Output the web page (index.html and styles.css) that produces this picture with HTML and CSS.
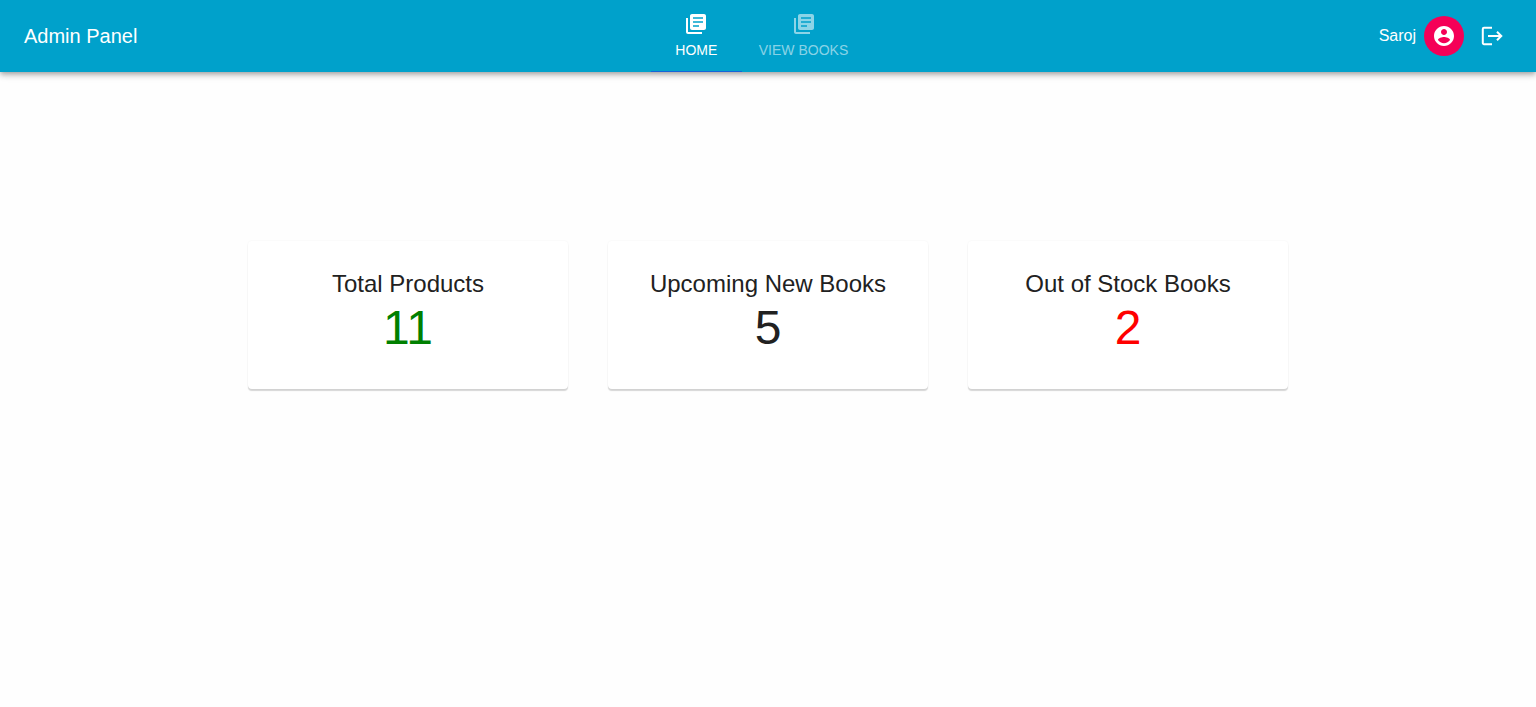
FILE: index.html
```html
<!DOCTYPE html>
<html lang="en">
<head>
<meta charset="utf-8">
<meta name="viewport" content="width=device-width, initial-scale=1">
<title>Admin Panel</title>
<link rel="stylesheet" href="styles.css">
</head>
<body>
<header class="app-bar">
  <h1 class="brand">Admin Panel</h1>
  <nav class="tabs" aria-label="Main">
    <a class="tab tab-active" href="#home" aria-current="page">
      <svg class="icon" viewBox="0 0 24 24" aria-hidden="true"><path d="M4 6H2v14c0 1.100.9 2 2 2h14v-2H4V6zm16-4H8c-1.100 0-2 .9-2 2v12c0 1.100.9 2 2 2h12c1.100 0 2-.9 2-2V4c0-1.100-.9-2-2-2zm-1 8.800H9V9.200h10v1.600zm-4 4H9v-1.600h6v1.600zm4-8H9V5.200h10v1.600z"/></svg>
      <span>HOME</span>
    </a>
    <a class="tab" href="#books">
      <svg class="icon" viewBox="0 0 24 24" aria-hidden="true"><path d="M4 6H2v14c0 1.100.9 2 2 2h14v-2H4V6zm16-4H8c-1.100 0-2 .9-2 2v12c0 1.100.9 2 2 2h12c1.100 0 2-.9 2-2V4c0-1.100-.9-2-2-2zm-1 8.800H9V9.200h10v1.600zm-4 4H9v-1.600h6v1.600zm4-8H9V5.200h10v1.600z"/></svg>
      <span>VIEW BOOKS</span>
    </a>
  </nav>
  <div class="account">
    <span>Saroj</span>
    <span class="avatar">
      <svg class="icon" viewBox="0 0 24 24" aria-hidden="true"><path d="M12 2C6.480 2 2 6.480 2 12s4.480 10 10 10 10-4.480 10-10S17.520 2 12 2zm0 3c1.660 0 3 1.340 3 3s-1.340 3-3 3-3-1.340-3-3 1.340-3 3-3zm0 14.200c-2.500 0-4.710-1.280-6-3.220.03-1.990 4-3.080 6-3.080 1.990 0 5.970 1.090 6 3.080-1.290 1.940-3.500 3.220-6 3.220z"/></svg>
    </span>
    <button class="logout" type="button" aria-label="Log out">
      <svg class="icon" viewBox="0 0 24 24" aria-hidden="true"><path class="stroke" d="M12 3.800H4a1.200 1.200 0 0 0-1.200 1.200v14a1.200 1.200 0 0 0 1.200 1.200h8M8 12h13M17 7.700l4.300 4.300-4.300 4.300"/></svg>
    </button>
  </div>
</header>
<main class="stats">
  <section class="card">
    <h2 class="card-title">Total Products</h2>
    <p class="count count-total">11</p>
  </section>
  <section class="card">
    <h2 class="card-title">Upcoming New Books</h2>
    <p class="count">5</p>
  </section>
  <section class="card">
    <h2 class="card-title">Out of Stock Books</h2>
    <p class="count count-out">2</p>
  </section>
</main>
</body>
</html>
```
FILE: styles.css
```css
* {
  box-sizing: border-box;
}

body {
  margin: 0;
  background: #fefefe;
  color: #212121;
  font-family: "Liberation Sans", Arial, sans-serif;
  font-size: 16px;
}

h1, h2, p {
  margin: 0;
  font-weight: 400;
}

.icon {
  display: block;
  width: 24px;
  height: 24px;
  fill: currentColor;
}

.stroke {
  fill: none;
  stroke: currentColor;
  stroke-width: 2;
}

.app-bar {
  display: flex;
  align-items: center;
  justify-content: space-between;
  min-height: 72px;
  padding: 0 24px;
  background: #00a1cb;
  color: #fff;
  box-shadow:
    0 2px 4px -1px rgba(0, 0, 0, 0.2),
    0 4px 5px 0 rgba(0, 0, 0, 0.14),
    0 1px 10px 0 rgba(0, 0, 0, 0.12);
}

.brand {
  font-size: 20px;
  line-height: 32px;
}

.tabs {
  display: flex;
}

.tab {
  display: flex;
  flex-direction: column;
  align-items: center;
  justify-content: center;
  gap: 5px;
  min-width: 91px;
  height: 72px;
  padding: 0 17px;
  border-bottom: 1px solid transparent;
  color: rgba(255, 255, 255, 0.55);
  font-size: 14px;
  line-height: 18px;
  text-decoration: none;
}

.tab-active {
  border-bottom-color: #1565d8;
  color: #fff;
}

.account {
  display: flex;
  align-items: center;
  gap: 8px;
}

.avatar {
  display: grid;
  place-items: center;
  width: 40px;
  height: 40px;
  border-radius: 50%;
  background: #f50057;
}

.logout {
  padding: 8px;
  border: 0;
  background: none;
  color: inherit;
  cursor: pointer;
}

.stats {
  display: flex;
  flex-wrap: wrap;
  justify-content: center;
  gap: 40px;
  padding: 169px 24px 40px;
}

.card {
  width: 320px;
  padding: 27px 16px 33px;
  border-radius: 4px;
  background: #fff;
  box-shadow:
    0 2px 1px 0 rgba(0, 0, 0, 0.16),
    0 0 2px 0 rgba(0, 0, 0, 0.06);
  text-align: center;
}

.card-title {
  font-size: 24px;
  line-height: 32px;
}

.count {
  font-size: 48px;
  line-height: 56px;
}

.count-total {
  color: #008000;
}

.count-out {
  color: #f00;
}
```
